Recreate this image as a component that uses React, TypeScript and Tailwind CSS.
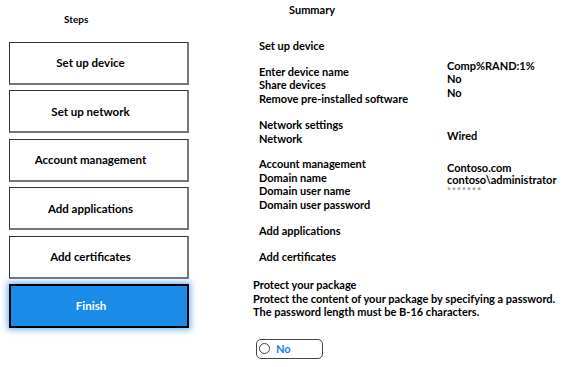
const font = { fontFamily: 'Lato, "Open Sans", sans-serif' };

const steps = [
  "Set up device",
  "Set up network",
  "Account management",
  "Add applications",
  "Add certificates",
];

function StepBox({ label }: { label: string }) {
  return (
    <div className="h-[43px] w-[180px] flex items-center justify-center pr-4 bg-white border border-[#333] border-r-2 border-b-2 border-r-[#777] border-b-[#777] text-[11.5px] font-bold text-black">
      {label}
    </div>
  );
}

export default function App() {
  return (
    <div
      className="w-[563px] h-[367px] bg-white flex text-black overflow-hidden"
      style={font}
    >
      {/* steps column */}
      <div className="w-[244px] shrink-0 pl-[9px] pt-[12px] flex flex-col">
        <div className="pl-[55px] text-[10px] font-bold leading-[14px]">Steps</div>
        <div className="mt-[16px] flex flex-col gap-[5.4px]">
          {steps.map((s) => (
            <StepBox key={s} label={s} />
          ))}
          <div className="h-[44px] w-[180px] flex items-center justify-center pr-4 bg-[#1a8be6] border-2 border-black text-white text-[11.5px] font-bold shadow-[0_0_6px_2px_rgba(30,140,240,0.6)]">
            Finish
          </div>
        </div>
      </div>

      {/* summary column */}
      <div className="flex-1 min-w-0 pt-[3px] pl-[15px] text-[11px] font-bold leading-[13.5px]">
        <div className="pl-[30px] leading-[14px]">Summary</div>

        <div className="mt-[22px]">Set up device</div>
        <div className="mt-[12px] flex items-start">
          <div className="w-[188px] shrink-0">
            <div>Enter device name</div>
            <div>Share devices</div>
            <div>Remove pre-installed software</div>
          </div>
          <div className="-mt-[6px]">
            <div>Comp%RAND:1%</div>
            <div>No</div>
            <div>No</div>
          </div>
        </div>

        <div className="mt-[13px] flex items-start">
          <div className="w-[188px] shrink-0">
            <div>Network settings</div>
            <div>Network</div>
          </div>
          <div className="pt-[11px]">Wired</div>
        </div>

        <div className="mt-[12px] flex items-start">
          <div className="w-[188px] shrink-0">
            <div>Account management</div>
            <div>Domain name</div>
            <div>Domain user name</div>
            <div>Domain user password</div>
          </div>
          <div className="pt-[5px] leading-[12px] whitespace-nowrap">
            <div>Contoso.com</div>
            <div>contoso\administrator</div>
            <div className="text-[#888] text-[9px] leading-[10px] tracking-[1.2px]">*******</div>
          </div>
        </div>

        <div className="mt-[13px]">Add applications</div>
        <div className="mt-[12px]">Add certificates</div>

        <div className="mt-[15px] -ml-[6px] whitespace-nowrap">
          <div>Protect your package</div>
          <div>Protect the content of your package by specifying a password.</div>
          <div>The password length must be B-16 characters.</div>
        </div>

        <div className="mt-[20px] -ml-[3px] w-[67px] h-[20px] rounded-[5px] border border-[#444] flex items-center pl-[2px] gap-[6px]">
          <span className="w-[11px] h-[11px] rounded-full border border-[#444] bg-white" />
          <span className="text-[#1a7fd6] text-[11px] font-bold">No</span>
        </div>
      </div>
    </div>
  );
}
